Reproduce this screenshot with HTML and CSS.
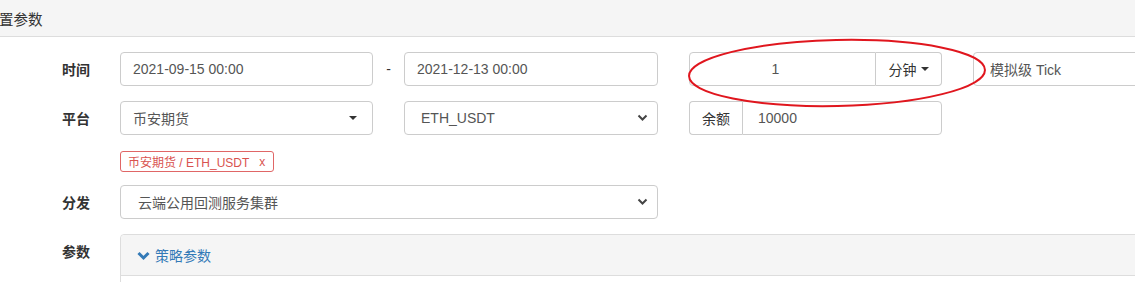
FILE: index.html
```html
<!DOCTYPE html>
<html lang="zh">
<head>
<meta charset="utf-8">
<link rel="stylesheet" href="styles.css">
</head>
<body>
<div class="page">
  <div class="head"><span class="title">置参数</span></div>
  <div class="body">
    <div class="row">
      <div class="label">时间</div>
      <input class="ctl c1" value="2021-09-15 00:00">
      <div class="dash">-</div>
      <input class="ctl c3" value="2021-12-13 00:00">
      <div class="group c5">
        <input class="ctl gin center" value="1">
        <div class="gbtn">分钟 <span class="caret"></span></div>
      </div>
      <input class="ctl c7" value="模拟级 Tick">
    </div>
    <div class="row">
      <div class="label">平台</div>
      <div class="ctl sel c1"><span>币安期货</span><span class="caret"></span></div>
      <div class="ctl sel native c3"><span>ETH_USDT</span>
        <svg class="chev" width="11" height="8" viewBox="0 0 11 8"><path d="M1.5 1.5 L5.5 5.5 L9.5 1.5" fill="none" stroke="#444" stroke-width="2"/></svg>
      </div>
      <div class="group c5">
        <div class="addon">余额</div>
        <input class="ctl gin2" value="10000">
      </div>
    </div>
    <div class="row tagrow">
      <div class="label"></div>
      <div class="tag c1">币安期货 / ETH_USDT<span class="x">x</span></div>
    </div>
    <div class="row">
      <div class="label">分发</div>
      <div class="ctl sel native wide"><span class="pad">云端公用回测服务集群</span>
        <svg class="chev" width="11" height="8" viewBox="0 0 11 8"><path d="M1.5 1.5 L5.5 5.5 L9.5 1.5" fill="none" stroke="#444" stroke-width="2"/></svg>
      </div>
    </div>
    <div class="row top">
      <div class="label lt">参数</div>
      <div class="panel">
        <div class="phead">
          <svg class="pchev" width="13" height="10" viewBox="0 0 13 10"><path d="M1.5 2 L6.5 7 L11.5 2" fill="none" stroke="#337ab7" stroke-width="3"/></svg>
          <span>策略参数</span>
        </div>
        <div class="pbody"></div>
      </div>
    </div>
  </div>
  <svg class="ring" width="310" height="74" viewBox="0 0 310 74"><ellipse cx="155" cy="37" rx="148" ry="33" fill="none" stroke="#e0161e" stroke-width="2" transform="rotate(-1.2 155 37)"/></svg>
</div>
</body>
</html>
```

FILE: styles.css
```css
html, body {
  margin: 0;
  padding: 0;
  background: #fff;
  overflow: hidden;
}
.page {
  position: relative;
  width: 1135px;
  height: 282px;
  overflow: hidden;
  font-family: "Liberation Sans", Arial, "Noto Sans CJK SC", sans-serif;
  font-size: 14px;
  color: #333;
}
.head {
  height: 36px;
  background: #f5f5f5;
  border-bottom: 1px solid #ddd;
  display: flex;
  align-items: center;
}
.title {
  font-size: 14.5px;
  margin-left: -1px;
  color: #333;
}
.body {
  padding-top: 15px;
  display: flex;
  flex-direction: column;
  gap: 15px;
}
.row {
  display: grid;
  grid-template-columns: 90px 30px 253px 31px 254px 31px 253px 31px 253px;
  align-items: center;
  height: 34px;
}
.row.tagrow {
  height: 20px;
  margin-top: 1px;
  margin-bottom: -1px;
}
.row.top {
  align-items: start;
  height: auto;
}
.label {
  grid-column: 1;
  text-align: right;
  font-weight: bold;
  color: #333;
  margin-top: -1px;
}
.label.lt {
  padding-top: 8px;
}
.c1 { grid-column: 3; }
.c3 { grid-column: 5; }
.c5 { grid-column: 7; }
.c7 { grid-column: 9; }
.dash {
  grid-column: 4;
  text-align: center;
  color: #333;
}
.ctl {
  box-sizing: border-box;
  height: 34px;
  border: 1px solid #ccc;
  border-radius: 4px;
  padding: 6px 12px;
  font-family: "Liberation Sans", Arial, "Noto Sans CJK SC", sans-serif;
  font-size: 14px;
  color: #555;
  background: #fff;
  outline: none;
  margin: 0;
  width: 100%;
}
.c7 {
  padding-left: 16px;
}
.sel {
  display: flex;
  align-items: center;
  justify-content: space-between;
}
.sel .caret {
  margin-right: 3px;
}
.native {
  padding-left: 16px;
  padding-right: 9px;
}
.wide {
  grid-column: 3 / span 3;
  padding-left: 17px;
}
.caret {
  display: inline-block;
  width: 0;
  height: 0;
  border-top: 4px solid #333;
  border-left: 4px solid transparent;
  border-right: 4px solid transparent;
  vertical-align: middle;
}
.group {
  display: flex;
  height: 34px;
}
.gin {
  flex: 1;
  border-radius: 4px 0 0 4px;
  text-align: center;
  min-width: 0;
  padding-left: 10px;
  padding-right: 24px;
}
.gbtn {
  box-sizing: border-box;
  width: 66px;
  height: 34px;
  border: 1px solid #ccc;
  border-left: none;
  border-radius: 0 4px 4px 0;
  display: flex;
  align-items: center;
  justify-content: center;
  gap: 4px;
  color: #333;
  background: #fff;
}
.addon {
  box-sizing: border-box;
  width: 53px;
  height: 34px;
  border: 1px solid #ccc;
  border-right: none;
  border-radius: 4px 0 0 4px;
  display: flex;
  align-items: center;
  justify-content: center;
  color: #333;
  background: #fff;
}
.gin2 {
  flex: 1;
  min-width: 0;
  border-radius: 0 4px 4px 0;
  padding-left: 15px;
}
.tag {
  box-sizing: border-box;
  width: 154px;
  height: 21px;
  border: 1px solid #e06666;
  border-radius: 3px;
  color: #d9534f;
  font-size: 12px;
  display: flex;
  align-items: center;
  padding-left: 7px;
  white-space: nowrap;
}
.tag .x {
  margin-left: 10px;
}
.panel {
  grid-column: 3 / span 7;
  width: 1100px;
  border: 1px solid #ddd;
  border-radius: 4px;
  box-sizing: border-box;
}
.phead {
  height: 40px;
  background: #f5f5f5;
  border-bottom: 1px solid #ddd;
  display: flex;
  align-items: center;
  padding-left: 16px;
  color: #337ab7;
  gap: 5px;
  border-radius: 4px 4px 0 0;
}
.pchev {
  margin-top: 1px;
}
.pbody {
  height: 30px;
}
.ring {
  position: absolute;
  left: 682px;
  top: 36px;
  pointer-events: none;
}
```
